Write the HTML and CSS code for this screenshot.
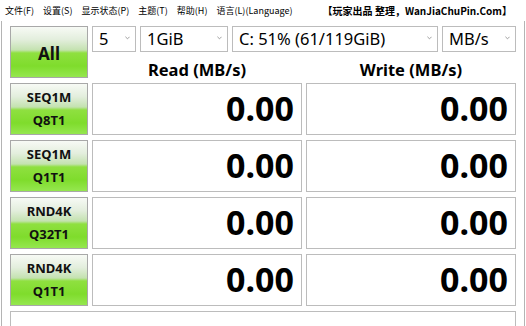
FILE: index.html
```html
<!DOCTYPE html>
<html lang="zh-CN">
<head>
    <meta charset="UTF-8">
    <title>CrystalDiskMark</title>
    <link rel="stylesheet" href="styles.css">
</head>
<body>
    <div class="menubar">
        <span>文件(F)</span>
        <span>设置(S)</span>
        <span>显示状态(P)</span>
        <span>主题(T)</span>
        <span>帮助(H)</span>
        <span>语言(L)(Language)</span>
        <span class="brand">【玩家出品 整理，WanJiaChuPin.Com】</span>
    </div>

    <div class="main">
        <div class="bench-grid">
            <button class="test-btn all">All</button>
            <div class="top-panel">
                <div class="select-row">
                    <div class="select sel-count">5<svg class="arrow" viewBox="0 0 6 4"><polyline points="0.5,0.5 3,3 5.5,0.5"/></svg></div>
                    <div class="select sel-size">1GiB<svg class="arrow" viewBox="0 0 6 4"><polyline points="0.5,0.5 3,3 5.5,0.5"/></svg></div>
                    <div class="select sel-drive">C: 51% (61/119GiB)<svg class="arrow" viewBox="0 0 6 4"><polyline points="0.5,0.5 3,3 5.5,0.5"/></svg></div>
                    <div class="select sel-unit">MB/s<svg class="arrow" viewBox="0 0 6 4"><polyline points="0.5,0.5 3,3 5.5,0.5"/></svg></div>
                </div>
                <div class="head-row">
                    <div class="head">Read (MB/s)</div>
                    <div class="head">Write (MB/s)</div>
                </div>
            </div>

            <button class="test-btn"><span>SEQ1M</span><span>Q8T1</span></button>
            <div class="score">0.00</div>
            <div class="score">0.00</div>

            <button class="test-btn"><span>SEQ1M</span><span>Q1T1</span></button>
            <div class="score">0.00</div>
            <div class="score">0.00</div>

            <button class="test-btn"><span>RND4K</span><span>Q32T1</span></button>
            <div class="score">0.00</div>
            <div class="score">0.00</div>

            <button class="test-btn"><span>RND4K</span><span>Q1T1</span></button>
            <div class="score">0.00</div>
            <div class="score">0.00</div>
        </div>
        <div class="comment"></div>
    </div>
</body>
</html>
```

FILE: styles.css
```css
:root {
    --frame: #b4b4b4;
    --box-border: #bcbcbc;
    --btn-border: #a8a8a8;
    --text: #000000;
}

* {
    margin: 0;
    padding: 0;
    box-sizing: border-box;
}

body {
    width: 526px;
    height: 326px;
    overflow: hidden;
    background: #ffffff;
    color: var(--text);
    font-family: "Noto Sans", "Noto Sans CJK SC", sans-serif;
}

/* Menu bar */
.menubar {
    height: 21px;
    display: flex;
    align-items: center;
    gap: 9px;
    padding: 0 14px 0 5px;
    font-size: 9px;
    font-family: "Noto Sans CJK SC", "Noto Sans", sans-serif;
    white-space: nowrap;
}

.menubar .brand {
    margin-left: auto;
    font-weight: 700;
    font-size: 10px;
}

/* Window body */
.main {
    margin: 0 1px;
    height: 305px;
    border-left: 1px solid var(--frame);
    border-right: 1px solid var(--frame);
    padding: 5px 8px 0;
}

.bench-grid {
    display: grid;
    grid-template-columns: 78px 210px 210px;
    grid-auto-rows: 52px;
    column-gap: 4px;
    row-gap: 5px;
}

.test-btn {
    border: 1px solid var(--btn-border);
    background: linear-gradient(to bottom, #f7faf5 0%, #e3eedd 25%, #c4e2b0 46%, #8fe040 52%, #7fdc2c 78%, #95e74f 100%);
    font-family: "Noto Sans", sans-serif;
    font-weight: 700;
    font-size: 13px;
    color: #111;
    display: flex;
    flex-direction: column;
    align-items: center;
    justify-content: center;
    line-height: 23px;
    cursor: pointer;
}

.test-btn.all {
    font-size: 17px;
    line-height: 1;
    padding-top: 2px;
}

.top-panel {
    grid-column: 2 / 4;
    display: flex;
    flex-direction: column;
}

.select-row {
    display: flex;
    gap: 4px;
    height: 26px;
}

.select {
    display: flex;
    align-items: center;
    justify-content: space-between;
    border: 1px solid var(--box-border);
    padding: 0 5px 1px 6px;
    font-size: 16.5px;
    white-space: nowrap;
}

.sel-count { width: 44px; }
.sel-size { width: 88px; }
.sel-drive { width: 206px; }
.sel-unit { width: 74px; }

.arrow {
    width: 5px;
    height: 4px;
    margin-top: -2px;
    fill: none;
    stroke: #8a8a8a;
    stroke-width: 1;
}

.head-row {
    display: grid;
    grid-template-columns: 210px 210px;
    column-gap: 4px;
    flex: 1;
}

.head {
    display: flex;
    align-items: flex-end;
    justify-content: center;
    font-weight: 700;
    font-size: 16.5px;
    line-height: 1;
    padding-bottom: 0;
}

.score {
    border: 1px solid var(--box-border);
    display: flex;
    align-items: center;
    justify-content: flex-end;
    padding: 0 7px 3px 0;
    font-weight: 700;
    font-size: 34px;
    line-height: 1;
}

.comment {
    margin-top: 5px;
    height: 30px;
    width: 506px;
    border: 1px solid var(--box-border);
}
```
